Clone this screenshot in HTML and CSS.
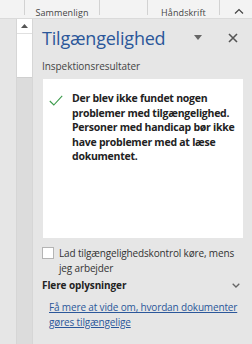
FILE: index.html
```html
<!DOCTYPE html>
<html lang="da">
<head>
<meta charset="utf-8">
<link rel="stylesheet" href="styles.css">
</head>
<body>
<div class="ribbon">
  <div class="grp g1"></div>
  <div class="grp g2"><span>Sammenlign</span></div>
  <div class="grp g3"></div>
  <div class="grp g4"><span>Håndskrift</span></div>
  <div class="grp g5">
    <svg class="chev-up" width="10" height="6" viewBox="0 0 10 6"><path d="M1 5.5 L5 1.5 L9 5.5" fill="none" stroke="#444" stroke-width="1.2"/></svg>
  </div>
</div>
<div class="main">
  <div class="scroll">
    <div class="sbtn"><svg width="7" height="4" viewBox="0 0 7 4"><path d="M0 4 L3.5 0 L7 4Z" fill="#555"/></svg></div>
    <div class="thumb"></div>
    <div class="track"></div>
  </div>
  <div class="pane">
    <div class="header">
      <h1 class="title">Tilgængelighed</h1>
      <svg class="drop" width="8" height="5" viewBox="0 0 8 5"><path d="M0 0 L8 0 L4 5Z" fill="#666"/></svg>
      <svg class="close" width="10" height="10" viewBox="0 0 10 10"><path d="M1 1 L9 9 M9 1 L1 9" stroke="#555" stroke-width="1.6"/></svg>
    </div>
    <div class="sub">Inspektionsresultater</div>
    <div class="card">
      <svg class="check" width="14" height="11" viewBox="0 0 14 11"><path d="M0.8 6 L4.8 10 L13.2 0.8" fill="none" stroke="#3a9a4a" stroke-width="1.1"/></svg>
      <p class="msg">Der blev ikke fundet nogen problemer med tilgængelighed. Personer med handicap bør ikke have problemer med at læse dokumentet.</p>
    </div>
    <label class="opt">
      <span class="box"></span>
      <span class="optText">Lad tilgængelighedskontrol køre, mens jeg arbejder</span>
    </label>
    <div class="more">
      <span class="moreTitle">Flere oplysninger</span>
      <svg class="chev-down" width="8" height="5" viewBox="0 0 8 5"><path d="M0.7 0.7 L4 4 L7.3 0.7" fill="none" stroke="#666" stroke-width="1.3"/></svg>
    </div>
    <a class="link" href="#">Få mere at vide om, hvordan dokumenter gøres tilgængelige</a>
  </div>
</div>
</body>
</html>
```
FILE: styles.css
```css
html, body {
  margin: 0;
  padding: 0;
}
body {
  width: 252px;
  height: 344px;
  overflow: hidden;
  background: #e6e6e6;
  font-family: "Open Sans", "Noto Sans", sans-serif;
  color: #333;
}
.ribbon {
  height: 19px;
  background: #f3f3f3;
  border-bottom: 1px solid #dadada;
  display: flex;
  box-sizing: border-box;
}
.grp {
  height: 15px;
  border-right: 1px solid #d2d2d2;
  display: flex;
  align-items: flex-end;
  justify-content: center;
  font-size: 9px;
  color: #444;
  line-height: 11px;
}
.grp span { transform: translateY(3px); letter-spacing: 0.1px; }
.g1 { width: 24px; }
.g2 { width: 74px; }
.g3 { width: 47px; }
.g4 { width: 71px; }
.g5 { flex: 1; border-right: none; height: 18px; align-items: center; justify-content: flex-end; padding-right: 8px; }
.chev-up { display: block; transform: translateY(2px); }
.main {
  display: flex;
  height: 325px;
}
.scroll {
  margin-left: 16px;
  width: 15px;
  display: flex;
  flex-direction: column;
  border-left: 1px solid #d6d6d6;
  border-right: 1px solid #d6d6d6;
  background: #dcdcdc;
}
.sbtn {
  height: 14px;
  background: #fff;
  border-bottom: 1px solid #e0e0e0;
  display: flex;
  align-items: center;
  justify-content: center;
}
.sbtn svg { display: block; }
.thumb {
  height: 43px;
  background: #fff;
  border-bottom: 1px solid #cfcfcf;
}
.track { flex: 1; }
.pane {
  flex: 1;
  padding-left: 9px;
  padding-right: 9px;
  display: flex;
  flex-direction: column;
}
.header {
  display: flex;
  align-items: center;
  height: 33px;
  margin-top: 2px;
}
.title {
  margin: 0;
  font-weight: 400;
  font-size: 18px;
  color: #2b579a;
  letter-spacing: -0.2px;
  flex: 1;
  line-height: 24px;
}
.drop { margin-right: 26px; display: block; }
.close { margin-right: 5px; display: block; }
.sub {
  font-size: 10px;
  color: #444;
  margin-top: 5px;
  line-height: 14px;
  letter-spacing: -0.05px;
}
.card {
  margin-top: 6px;
  margin-left: 1px;
  background: #fff;
  height: 159px;
  display: flex;
  align-items: flex-start;
  padding: 12px 6px 0 6px;
  box-sizing: border-box;
}
.check { flex: none; margin-top: 4px; display: block; }
.msg {
  margin: 0 0 0 9px;
  font-size: 10.5px;
  font-weight: 700;
  line-height: 14.6px;
  color: #222;
  letter-spacing: -0.25px;
}
.opt {
  display: flex;
  align-items: flex-start;
  margin-top: 8px;
}
.box {
  flex: none;
  width: 10px;
  height: 10px;
  background: #fff;
  border: 1px solid #b4b4b4;
  margin-top: 1px;
}
.optText {
  margin-left: 5px;
  font-size: 10px;
  line-height: 15px;
  color: #333;
  letter-spacing: -0.15px;
}
.more {
  display: flex;
  align-items: center;
  justify-content: space-between;
  margin-top: 1px;
  height: 16px;
}
.moreTitle {
  font-size: 10px;
  font-weight: 700;
  color: #222;
  letter-spacing: -0.1px;
}
.chev-down { display: block; margin-right: 3px; }
.link {
  margin-top: 7px;
  margin-left: 7px;
  font-size: 10px;
  line-height: 14.5px;
  color: #2b579a;
  text-decoration: underline;
  letter-spacing: -0.15px;
}
```
